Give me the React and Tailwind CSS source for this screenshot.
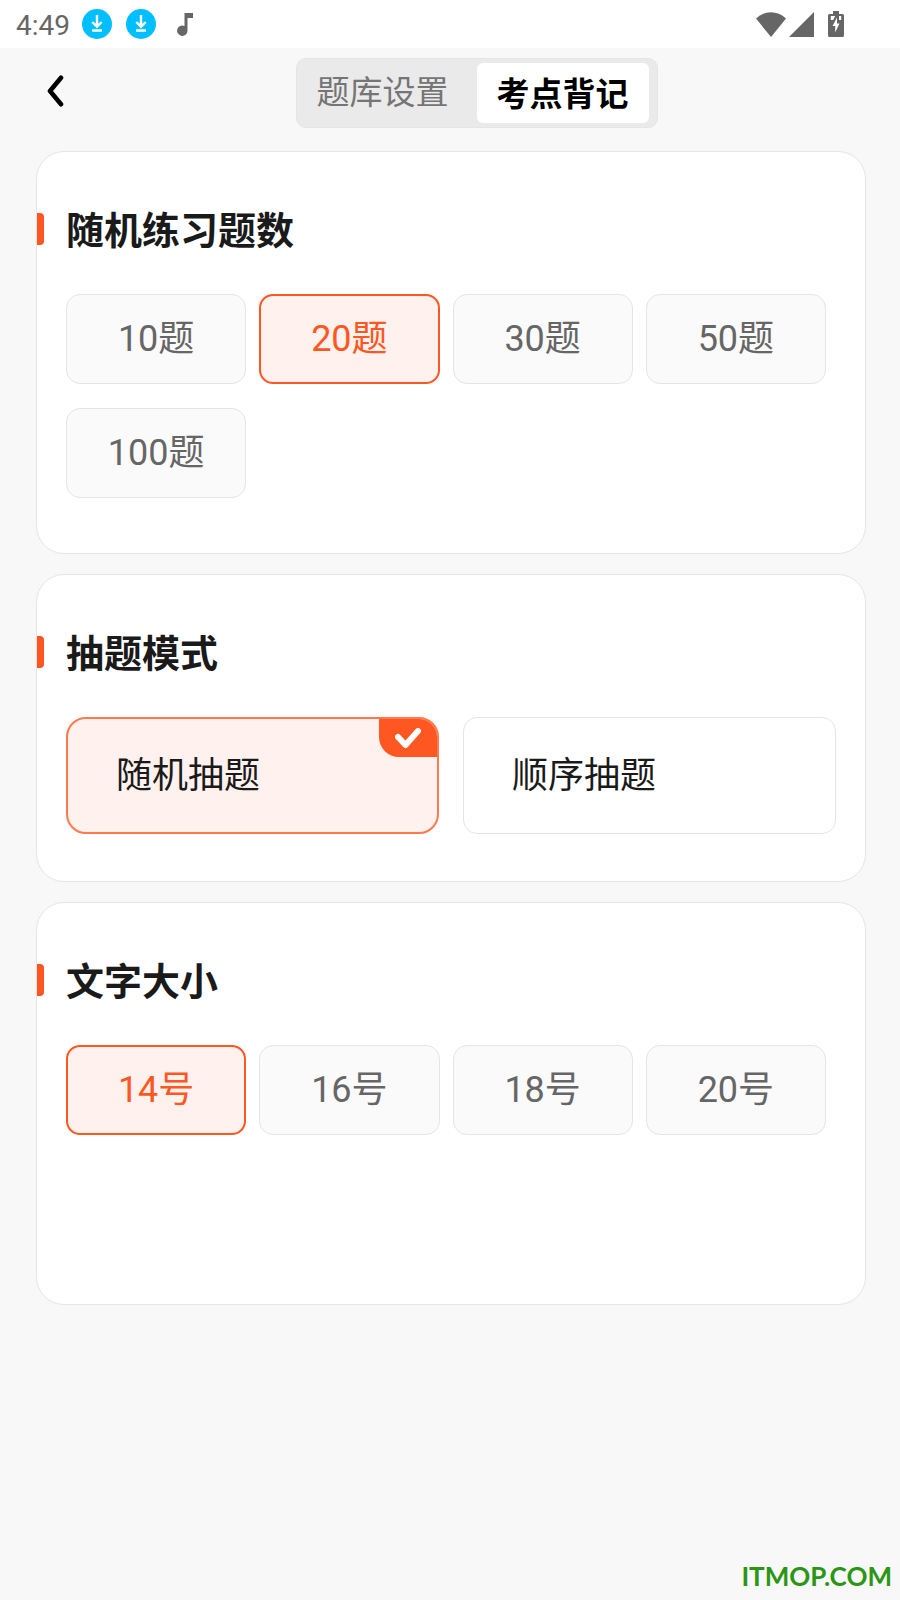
import { useState } from "react";
import clsx from "clsx";

const counts = ["10题", "20题", "30题", "50题", "100题"];
const modes = ["随机抽题", "顺序抽题"];
const sizes = ["14号", "16号", "18号", "20号"];
const tabs = ["题库设置", "考点背记"];

function DownloadIcon() {
    return (
        <svg className="size-[30px]" viewBox="0 0 30 30" fill="none" aria-hidden="true">
            <circle cx="15" cy="15" r="15" fill="#00bfff" />
            <path d="M15 6V17.500M10.300 13l4.700 4.700 4.700-4.700M10 21.500h10" stroke="#fff" strokeWidth="2.4" />
        </svg>
    );
}

function StatusBar() {
    return (
        <div className="h-12 shrink-0 bg-white flex items-center justify-between pl-4 pr-14 text-[#666]">
            <div className="flex items-center">
                <span className="text-[28px] leading-8 mr-3 pt-1">4:49</span>
                <span className="flex gap-3.5">
                    <DownloadIcon />
                    <DownloadIcon />
                </span>
                <svg className="w-4 h-[23px] ml-[21px]" viewBox="0 0 16 23" fill="currentColor" aria-hidden="true">
                    <path d="M7.5 0H16V5H10.5V17.5A5.2 5.2 0 1 1 7.5 13z" />
                </svg>
            </div>
            <div className="flex items-center gap-[3px]">
                <svg className="w-[30px] h-[25px]" viewBox="0 0 30 25" fill="currentColor" aria-hidden="true">
                    <path d="M0 6.5C4.500 2.300 9.500 .2 15 .2s10.500 2.100 15 6.300L15 25z" />
                </svg>
                <svg className="w-[25px] h-[25px]" viewBox="0 0 25 25" fill="currentColor" aria-hidden="true">
                    <path d="M25 0V25H0z" />
                </svg>
                <svg className="w-4 h-[26px] ml-[11px]" viewBox="0 0 16 26" fill="currentColor" aria-hidden="true">
                    <path d="M5 0h6v3h3.500q1.500 0 1.500 1.500v20q0 1.500-1.500 1.500h-13Q0 26 0 24.500v-20Q0 3 1.500 3H5z" />
                    <path d="M2.800 5h4.400l-2 4H2.800zM11 5h2.200v4H11zM9 6.500v6h2.500L7.200 21.500V15H4.500z" fill="#fff" />
                </svg>
            </div>
        </div>
    );
}

function Card({ title, className, children }) {
    return (
        <section className={clsx("bg-white border border-[#e5e5e5] rounded-[28px] pt-[57px]", className)}>
            <div className="flex items-center h-10">
                <span className="w-[7px] h-8 mr-[22px] rounded-r bg-[#ff5722]"></span>
                <h2 className="pt-1 text-[38px] leading-10 font-bold text-[#1a1a1a]">{title}</h2>
            </div>
            <div className="mt-[45px] px-[29px]">{children}</div>
        </section>
    );
}

function Chips({ items, value, onChange }) {
    return (
        <div className="grid grid-cols-4 gap-x-[13px] gap-y-6 pr-2.5">
            {items.map((item) => (
                <button
                    key={item}
                    type="button"
                    aria-pressed={item === value}
                    onClick={() => onChange(item)}
                    className={clsx(
                        "h-[90px] rounded-[14px] flex items-center justify-center text-4xl",
                        item === value
                            ? "border-2 border-[#ff5722] bg-[#fff1ee] text-[#ff5722]"
                            : "border border-[#e5e5e5] bg-[#fafafa] text-[#666]"
                    )}>
                    {item}
                </button>
            ))}
        </div>
    );
}

export default function App() {
    const [tab, setTab] = useState("考点背记");
    const [count, setCount] = useState("20题");
    const [mode, setMode] = useState("随机抽题");
    const [size, setSize] = useState("14号");

    return (
        <div className="min-h-screen flex flex-col bg-[#f8f8f8] font-[Roboto,'Noto_Sans_CJK_SC',sans-serif]">
            <StatusBar />

            <header className="flex items-start pt-2.5 pr-3">
                <button type="button" aria-label="返回" className="w-[65px] h-[65px] flex items-center justify-end">
                    <svg className="w-[18px] h-8" viewBox="0 0 18 32" fill="none" aria-hidden="true">
                        <path d="M14 2.800L3 16l11 13.200" stroke="#000" strokeWidth="4.6" strokeLinecap="round" strokeLinejoin="round" />
                    </svg>
                </button>
                <nav className="flex-1 flex justify-center">
                    <div className="flex gap-2 py-1 pr-2 rounded-[10px] border border-[#e5e5e5] bg-[#eaeaea]">
                        {tabs.map((t) => (
                            <button
                                key={t}
                                type="button"
                                onClick={() => setTab(t)}
                                className={clsx(
                                    "h-[60px] px-5 rounded-md text-[33px] leading-10",
                                    t === tab ? "pt-1 bg-white font-bold text-black" : "text-[#757575]"
                                )}>
                                {t}
                            </button>
                        ))}
                    </div>
                </nav>
            </header>

            <main className="flex flex-col gap-5 pt-[23px] pl-9 pr-[34px]">
                <Card title="随机练习题数" className="pb-[55px]">
                    <Chips items={counts} value={count} onChange={setCount} />
                </Card>

                <Card title="抽题模式" className="pb-[47px]">
                    <div className="grid grid-cols-2 gap-6">
                        {modes.map((m) => (
                            <button
                                key={m}
                                type="button"
                                aria-pressed={m === mode}
                                onClick={() => setMode(m)}
                                className={clsx(
                                    "relative h-[117px] pl-12 text-left text-4xl text-[#1a1a1a]",
                                    m === mode
                                        ? "rounded-[20px] border-2 border-[#ff784e] bg-[#fff1ee]"
                                        : "rounded-[14px] border border-[#e5e5e5] bg-white"
                                )}>
                                {m}
                                {m === mode && (
                                    <span className="absolute top-0 right-0 w-[58px] h-[38px] rounded-tr-[18px] rounded-bl-[20px] bg-[#ff5722] flex items-center justify-center">
                                        <svg className="w-[26px] h-[21px]" viewBox="0 0 26 21" fill="none" aria-hidden="true">
                                            <path d="M3 9l7.500 8L23 3" stroke="#fff" strokeWidth="6" strokeLinecap="round" strokeLinejoin="round" />
                                        </svg>
                                    </span>
                                )}
                            </button>
                        ))}
                    </div>
                </Card>

                <Card title="文字大小" className="pb-[169px]">
                    <Chips items={sizes} value={size} onChange={setSize} />
                </Card>
            </main>

            <footer className="mt-auto pr-2 pb-1.5 text-right text-[26px] leading-9 font-bold text-[#2a9614] font-[Lato,sans-serif]">
                ITMOP.COM
            </footer>
        </div>
    );
}
